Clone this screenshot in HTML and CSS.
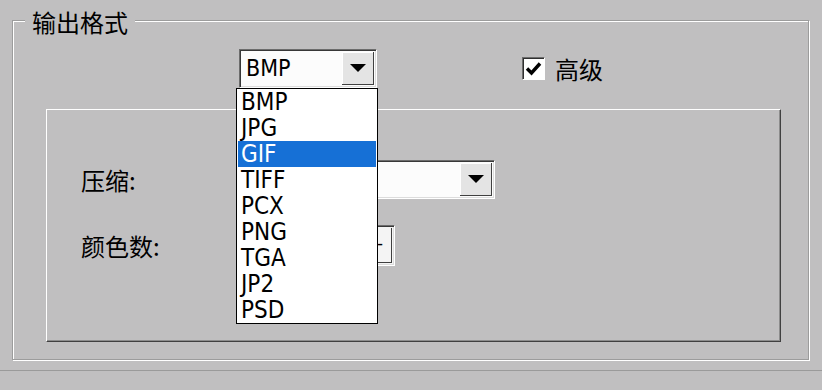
FILE: index.html
```html
<!DOCTYPE html>
<html lang="zh-CN">
<head>
  <meta charset="UTF-8">
  <title>输出格式</title>
  <link rel="stylesheet" href="styles.css">
</head>
<body>
  <div class="dialog">
    <fieldset class="group">
      <legend>输出格式</legend>

      <!-- format combo + advanced checkbox -->
      <div class="top-row">
        <div class="combo combo-format">
          <span class="combo-text">BMP</span>
          <span class="combo-btn">
            <svg width="16" height="8" viewBox="0 0 16 8"><path d="M0 0H16L8 8Z" fill="#000"/></svg>
          </span>
          <ul class="drop-list">
            <li>BMP</li>
            <li>JPG</li>
            <li class="selected">GIF</li>
            <li>TIFF</li>
            <li>PCX</li>
            <li>PNG</li>
            <li>TGA</li>
            <li>JP2</li>
            <li>PSD</li>
          </ul>
        </div>
        <label class="check">
          <span class="check-box">
            <svg width="17" height="15" viewBox="0 0 17 15"><path d="M2 7.5L6.5 12L15 2.5" fill="none" stroke="#000" stroke-width="3.4"/></svg>
          </span>
          <span class="check-text">高级</span>
        </label>
      </div>

      <!-- advanced options -->
      <div class="panel">
        <span class="field-label">压缩:</span>
        <div class="combo combo-compress">
          <span class="combo-text"></span>
          <span class="combo-btn">
            <svg width="16" height="8" viewBox="0 0 16 8"><path d="M0 0H16L8 8Z" fill="#000"/></svg>
          </span>
        </div>
        <span class="field-label">颜色数:</span>
        <div class="spin">
          <span class="spin-field"></span>
          <span class="spin-btn">-</span>
        </div>
      </div>
    </fieldset>
    <div class="status-bar"></div>
  </div>
</body>
</html>
```

FILE: styles.css
```css
body {
  margin: 0;
  background: #c0bfc0;
  font-family: "Noto Sans CJK SC", "Liberation Sans", sans-serif;
  color: #000;
}

.dialog {
  padding-top: 4px;
  height: 386px;
  display: flex;
  flex-direction: column;
}

/* etched group box */
.group {
  margin: 0 13px 0 12px;
  padding: 0 27px 17px 33px;
  border: 1px solid #9c9c9c;
  box-shadow: inset 1px 1px 0 #fff, 1px 1px 0 #fff;
  min-width: 0;
}

.group legend {
  margin-left: -21px;
  padding: 4px 7px 0 7px;
  font-size: 24px;
  line-height: 28px;
  background: #c0bfc0;
}

.top-row {
  display: flex;
  align-items: center;
  margin-top: 13px;
  margin-left: 193px;
}

/* combo boxes */
.combo {
  position: relative;
  display: flex;
  box-sizing: border-box;
  height: 39px;
  border: 1px solid;
  border-color: #6c6c6c #fff #fff #6c6c6c;
  box-shadow: inset 1px 1px 0 #383838, inset -1px -1px 0 #dcdcdc;
  background: #fcfcfc;
  padding: 2px;
}

.combo-format {
  width: 138px;
}

.combo-text {
  flex: 1;
  font-family: "DejaVu Sans Condensed", "Liberation Sans", sans-serif;
  font-size: 23px;
  line-height: 33px;
  padding-left: 4px;
}

.combo-btn {
  width: 31px;
  display: flex;
  align-items: center;
  justify-content: center;
  background: #e4e4e4;
  border-right: 1px solid #404040;
  border-bottom: 1px solid #404040;
  box-shadow: inset 1px 1px 0 #fff;
}

.drop-list {
  position: absolute;
  top: 38px;
  left: -4px;
  width: 142px;
  box-sizing: border-box;
  margin: 0;
  padding: 0;
  list-style: none;
  border: 1px solid #000;
  background: #fff;
  z-index: 2;
}

.drop-list li {
  font-family: "DejaVu Sans Condensed", "Liberation Sans", sans-serif;
  font-size: 24px;
  line-height: 26px;
  height: 26px;
  padding-left: 3px;
  margin: 0 1px;
}

.drop-list .selected {
  background: #1670d6;
  color: #fff;
}

/* checkbox */
.check {
  display: flex;
  align-items: center;
  margin-left: 145px;
  gap: 10px;
}

.check-box {
  width: 21px;
  height: 21px;
  display: flex;
  align-items: center;
  justify-content: center;
  background: #fff;
  border: 1px solid;
  border-color: #6c6c6c #fff #fff #6c6c6c;
  box-shadow: inset 1px 1px 0 #303030;
}

.check-text {
  font-size: 24px;
  line-height: 28px;
}

/* raised inner panel */
.panel {
  margin-top: 21px;
  height: 233px;
  box-sizing: border-box;
  border: 1px solid;
  border-color: #fff #404040 #404040 #fff;
  box-shadow: inset -1px -1px 0 #8c8c8c;
  padding: 50px 0 0 34px;
  display: grid;
  grid-template-columns: 158px auto;
  grid-auto-rows: min-content;
  row-gap: 26px;
  align-items: center;
  justify-items: start;
}

.field-label {
  font-size: 24px;
  line-height: 28px;
}

.combo-compress {
  width: 256px;
}

.spin {
  display: flex;
  box-sizing: border-box;
  width: 156px;
  height: 41px;
  border: 1px solid;
  border-color: #6c6c6c #fff #fff #6c6c6c;
  box-shadow: inset 1px 1px 0 #383838, inset -1px -1px 0 #dcdcdc;
  background: #f4f4f4;
  padding: 2px;
}

.spin-field {
  flex: 1;
}

.spin-btn {
  width: 14px;
  font-family: "Liberation Sans", sans-serif;
  font-size: 18px;
  line-height: 32px;
  border-right: 1px solid #404040;
  border-bottom: 1px solid #404040;
}

.status-bar {
  margin-top: 10px;
  flex: 1;
  border-top: 1px solid #9a9a9a;
}
```
